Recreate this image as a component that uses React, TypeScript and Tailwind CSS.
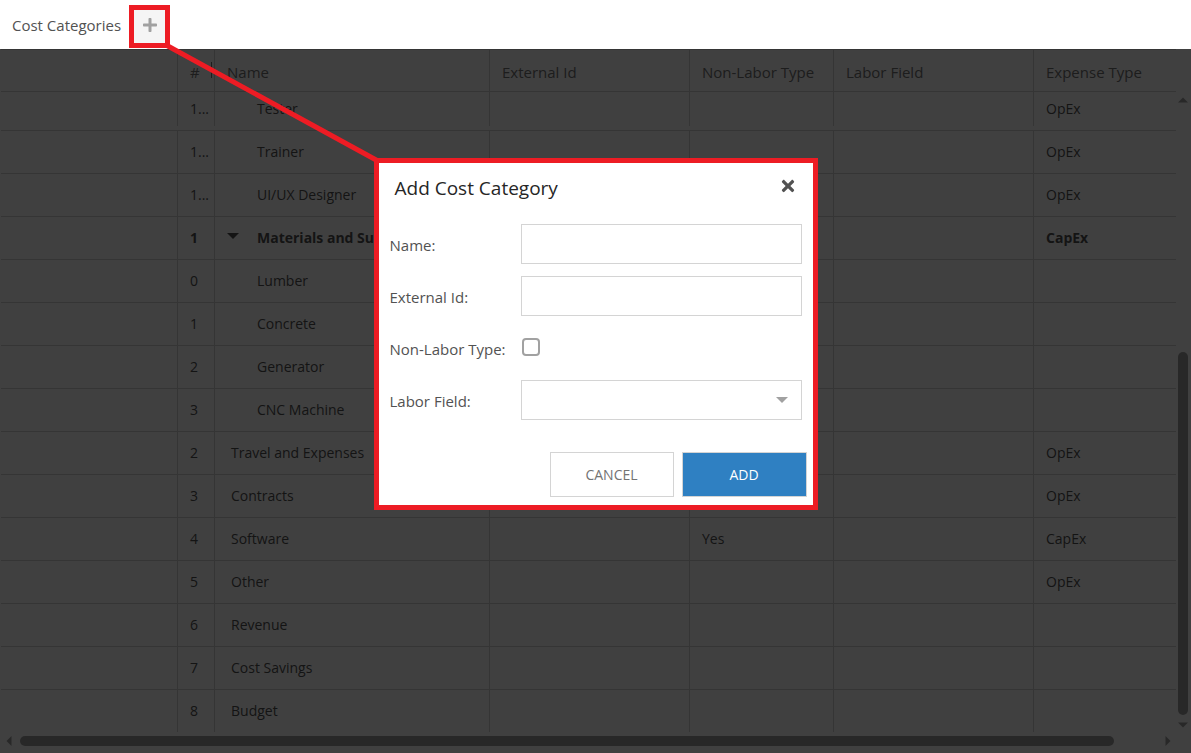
import { FaPlus, FaTimes } from "react-icons/fa";

// ---- Grid data ----

type Row = {
  num: string;
  name: string;
  level?: "child" | "parent";
  nonLabor?: string;
  expense?: string;
};

const rows: Row[] = [
  { num: "1...", name: "Tester", level: "child", expense: "OpEx" },
  { num: "1...", name: "Trainer", level: "child", expense: "OpEx" },
  { num: "1...", name: "UI/UX Designer", level: "child", expense: "OpEx" },
  { num: "1", name: "Materials and Supplies", level: "parent", expense: "CapEx" },
  { num: "0", name: "Lumber", level: "child" },
  { num: "1", name: "Concrete", level: "child" },
  { num: "2", name: "Generator", level: "child" },
  { num: "3", name: "CNC Machine", level: "child" },
  { num: "2", name: "Travel and Expenses", expense: "OpEx" },
  { num: "3", name: "Contracts", expense: "OpEx" },
  { num: "4", name: "Software", nonLabor: "Yes", expense: "CapEx" },
  { num: "5", name: "Other", expense: "OpEx" },
  { num: "6", name: "Revenue" },
  { num: "7", name: "Cost Savings" },
  { num: "8", name: "Budget" },
];

const gridCols = "grid grid-cols-[177px_37px_275px_200px_144px_200px_1fr] ml-px -mr-px";
const cell = "flex items-center border-r border-neutral-300 px-3 min-w-0 overflow-hidden whitespace-nowrap";

function Caret({ className }: { className: string }) {
  return (
    <svg viewBox="0 0 12 6" className={className} fill="currentColor">
      <path d="M0 0h12L6 6z" />
    </svg>
  );
}

function GridRow({ row, first }: { row: Row; first: boolean }) {
  const bold = row.level === "parent" ? "font-bold" : "";
  return (
    <div
      className={`${gridCols} border-b border-neutral-300 ${first ? "h-[39px] pb-1" : "h-[43px]"} ${bold}`}
    >
      <div className={cell} />
      <div className={cell}>{row.num}</div>
      <div className={`${cell} ${row.level ? "pl-10.5" : "pl-4"} relative`}>
        {row.level === "parent" && (
          <Caret className="absolute left-3 top-4 w-3 h-1.5 text-neutral-600" />
        )}
        {row.name}
      </div>
      <div className={cell} />
      <div className={cell}>{row.nonLabor}</div>
      <div className={cell} />
      <div className={`${cell} border-r-0`}>{row.expense}</div>
    </div>
  );
}

function CostGrid() {
  const headers = ["", "#", "Name", "External Id", "Non-Labor Type", "Labor Field", "Expense Type"];
  return (
    <div className="relative flex-1 min-h-0 overflow-hidden bg-white text-sm text-neutral-600">
      <div className="flex h-full">
        <div className="flex-1 min-w-0 overflow-hidden">
          <div className={`${gridCols} h-[43px] border-y border-neutral-300 text-[15px] text-neutral-500`}>
            {headers.map((h, i) => (
              <div key={i} className={`${cell} pt-1 ${i === 6 ? "border-r-0" : ""} relative`}>
                {h}
                {h === "#" && <span className="absolute right-0.5 top-3 h-4 border-r border-neutral-500" />}
              </div>
            ))}
          </div>
          {rows.map((row, i) => (
            <GridRow key={i} row={row} first={i === 0} />
          ))}
        </div>
        {/* vertical scrollbar */}
        <div className="w-[15px] shrink-0 relative">
          <Caret className="absolute left-0.5 top-12 w-2.5 h-1.5 rotate-180 text-neutral-400" />
          <div className="absolute left-0.5 top-[303px] h-[363px] w-2.5 rounded-full bg-neutral-400" />
          <Caret className="absolute left-0.5 top-[673px] w-2.5 h-1.5 text-neutral-400" />
        </div>
      </div>
      {/* horizontal scrollbar */}
      <div className="absolute left-0 right-0 bottom-0 h-[21px] bg-white">
        <Caret className="absolute left-1 top-1.5 w-2.5 h-1.5 rotate-90 text-neutral-400" />
        <div className="absolute left-5 top-1 h-2.5 w-[1094px] rounded-full bg-neutral-400" />
        <Caret className="absolute left-[1163px] top-1.5 w-2.5 h-1.5 -rotate-90 text-neutral-400" />
      </div>
    </div>
  );
}

function Field({ label, children }: { label: string; children: React.ReactNode }) {
  return (
    <div className="flex items-center h-10">
      <label className="w-[131px] shrink-0 pt-0.5 text-[15px] text-neutral-600">{label}</label>
      {children}
    </div>
  );
}

const inputClass = "flex-1 min-w-0 h-10 border border-neutral-300 bg-white";

function AddDialog() {
  return (
    <div className="absolute left-0 right-0 top-[158px] flex justify-center">
      <div className="w-[444px] border-[5px] border-[#ed1c24] bg-white">
        <div className="flex justify-between items-center pt-2.5 pb-[21px] pl-4 pr-4">
          <h2 className="text-[19px] leading-[30px] text-neutral-800">Add Cost Category</h2>
          <FaTimes className="size-4.5 -mt-1 text-neutral-600" />
        </div>
        <div className="flex flex-col gap-3 px-[11px]">
          <Field label="Name:">
            <input className={inputClass} />
          </Field>
          <Field label="External Id:">
            <input className={inputClass} />
          </Field>
          <Field label="Non-Labor Type:">
            <span className="size-4.5 ml-px -mt-0.5 rounded-sm border-2 border-neutral-400" />
          </Field>
          <Field label="Labor Field:">
            <div className={`${inputClass} relative`}>
              <Caret className="absolute right-3 top-4 w-3.5 h-1.5 text-neutral-400" />
            </div>
          </Field>
        </div>
        <div className="flex justify-end gap-2 mt-8 mb-2 pr-1.5">
          <button className="w-[124px] h-[45px] border border-neutral-300 bg-white text-sm text-neutral-500">
            CANCEL
          </button>
          <button className="w-[125px] h-[45px] border border-neutral-300 bg-[#2f80c2] text-sm text-white">
            ADD
          </button>
        </div>
      </div>
    </div>
  );
}

export default function App() {
  return (
    <div
      className="relative flex flex-col h-screen w-full overflow-hidden bg-white"
      style={{ fontFamily: '"Open Sans", sans-serif' }}
    >
      <header className="flex items-center h-[49px] shrink-0 pl-3 pt-1 bg-white">
        <span className="-mt-0.5 text-[15px] text-neutral-600">Cost Categories</span>
        <button className="flex items-center justify-center w-[41px] h-[43px] ml-2 border-[5px] border-[#ed1c24] bg-neutral-100">
          <FaPlus className="size-4 mb-1 text-neutral-400" />
        </button>
      </header>
      <div className="relative flex-1 min-h-0 flex flex-col">
        <CostGrid />
        <div className="absolute inset-0 bg-black/75" />
      </div>
      {/* callout line from the plus button to the dialog */}
      <svg className="absolute inset-0 w-full h-full pointer-events-none" fill="none">
        <line x1="166" y1="45" x2="378" y2="161" stroke="#ed1c24" strokeWidth="5" />
      </svg>
      <AddDialog />
    </div>
  );
}
